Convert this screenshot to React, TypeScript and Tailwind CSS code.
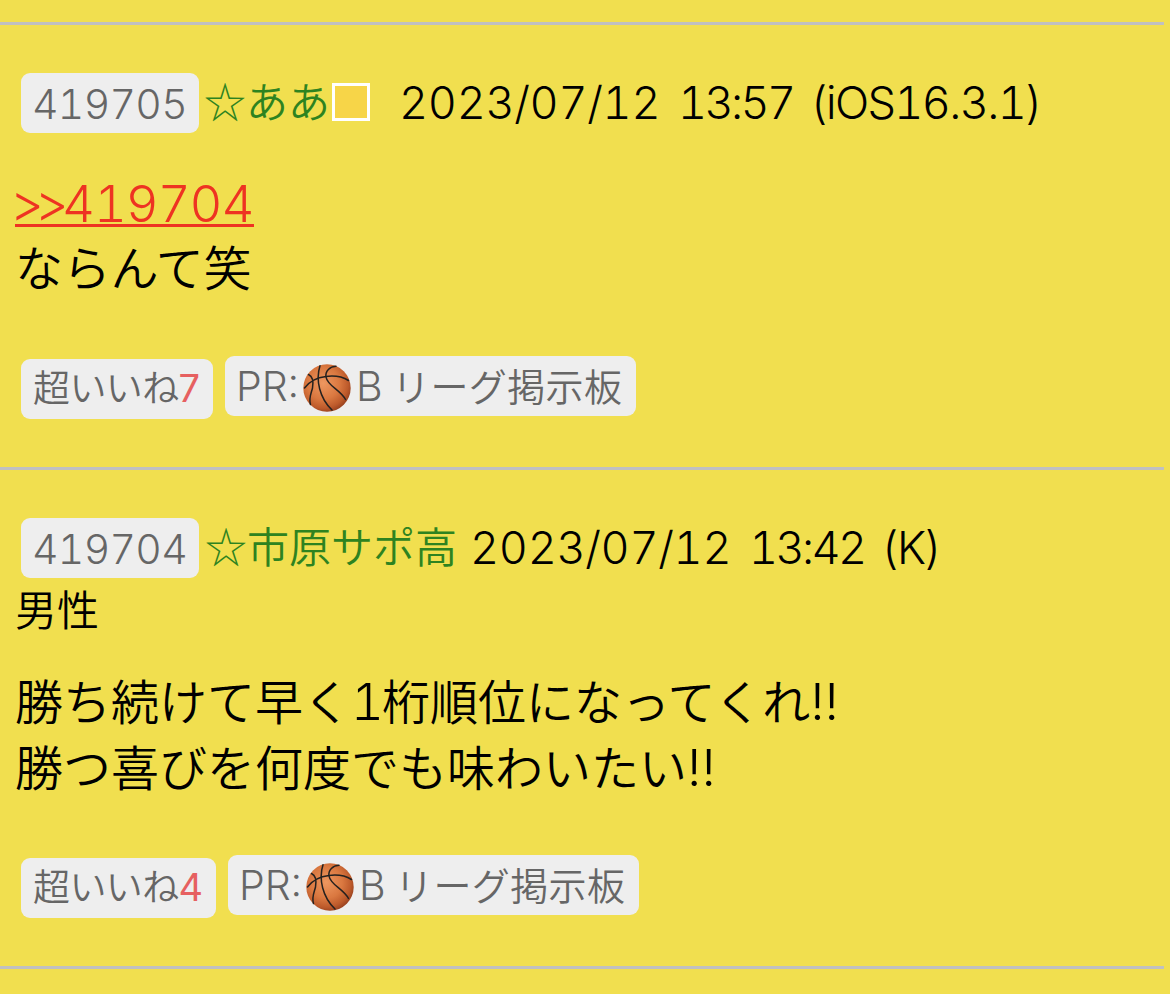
import React from 'react';

const JP = "font-['Noto_Sans_CJK_JP',sans-serif] font-[350] whitespace-pre";
const LATIN = "font-['Inter','Noto_Sans_CJK_JP',sans-serif] font-[340] tabular-nums whitespace-pre";

const Basketball: React.FC = () => (
    <svg viewBox="0 0 48 48" className="mt-[3px] h-12 w-12 shrink-0">
        <defs>
            <radialGradient id="ball" cx="0.42" cy="0.4" r="0.62">
                <stop offset="0" stopColor="#ee9760" />
                <stop offset="0.55" stopColor="#da7840" />
                <stop offset="0.85" stopColor="#bd5a2b" />
                <stop offset="1" stopColor="#9b4320" />
            </radialGradient>
        </defs>
        <circle cx="24" cy="24" r="23.7" fill="url(#ball)" />
        <g fill="none" stroke="#25211f" strokeWidth="1.5" strokeLinecap="round">
            <path d="M1.5 24C6 18 14 13.500 23 12.500C31 11.500 39 12.500 45.500 16.500" />
            <path d="M5.500 10.500C10 12.500 10.500 18 9.500 24C8 30 5.500 34 7.500 40.500" />
            <path d="M17 1.800C12.500 16 16.500 34 29 46" />
            <path d="M33 2.300C27 2.500 22 7 23 13C24.500 22 37 25.500 42.500 35.500" />
        </g>
    </svg>
);

const NumberPill: React.FC<{ children: React.ReactNode }> = ({ children }) => (
    <div className={`${LATIN} ml-[21px] flex h-[60px] w-[178px] items-center rounded-[9px] bg-[#eee] pt-[2px] pl-[11px] text-[41px] leading-[58px] tracking-[-0.7px] text-[#666]`}>
        {children}
    </div>
);

const Stamp: React.FC<{ date: string, time: string, client: string }> = ({ date, time, client }) => (
    <div className={`${LATIN} flex text-[45px] leading-[60px]`}>
        <span className="w-[279px] tracking-[-0.3px]">{date}</span>
        <span className="w-[132px] tracking-[-2.6px]">{time}</span>
        <span className="tracking-[-1.6px]">{client}</span>
    </div>
);

const Actions: React.FC<{ likes: number, likeClass: string }> = ({ likes, likeClass }) => (
    <div className="flex items-start pl-[21px]">
        <div className={`mt-[3px] flex h-[60px] rounded-[9px] bg-[#eee] pl-[12px] text-[#666] ${likeClass}`}>
            <span className={`${JP} h-[60px] text-[37px] leading-[54px] tracking-[-0.6px]`}>超いいね</span>
            <span className="font-['Inter',sans-serif] text-[38px] leading-[58px] font-normal text-[#e66060]">{likes}</span>
        </div>
        <div className="ml-[12px] flex h-[60px] w-[411px] rounded-[9px] bg-[#eee] pl-[11px] text-[#666]">
            <span className={`${LATIN} w-[66.5px] text-[41px] leading-[61px]`}>PR:</span>
            <div className="flex items-center"><Basketball /></div>
            <span className={`${LATIN} ml-[5.5px] w-[36px] text-[41px] leading-[61px]`}>B</span>
            <span className={`${JP} text-[38px] leading-[58px] tracking-[0.4px]`}>リーグ掲示板</span>
        </div>
    </div>
);

const Divider: React.FC = () => <div className="h-[3px] w-[1164px] bg-[#c0c0c0]" />;

const App: React.FC = () => (
    <div className="h-[994px] w-[1170px] overflow-hidden bg-[#f1df4f] pt-[22px] text-black">
        <Divider />
        <div className="h-[442px] pt-[48px]">
            <div className="flex h-[60px] items-start">
                <NumberPill>419705</NumberPill>
                <span className={`${JP} ml-[5px] w-[128px] text-[42px] leading-[54px] text-[#2e8320]`}>☆ああ</span>
                <span className="mt-[10px] mr-[29px] h-[38px] w-[38px] border-[3px] border-white bg-[#f7d548]" />
                <Stamp date="2023/07/12" time="13:57" client="(iOS16.3.1)" />
            </div>
            <div className="mt-[36px] flex h-[66px] pl-[15px]">
                <div className="flex h-[58px] w-[239px] items-baseline border-b-[3px] border-[#ee3322] leading-[69px] text-[#ee3322]">
                    <span className={`${LATIN} -ml-[4px] w-[51px] text-[52px] tracking-[-9px]`}>&gt;&gt;</span>
                    <span className={`${LATIN} text-[51px] tracking-[-1.1px]`}>419704</span>
                </div>
            </div>
            <p className={`${JP} h-[66px] pl-[15px] text-[48px] leading-[61px] tracking-[-0.3px]`}>ならんて笑</p>
            <div className="pt-[55px]">
                <Actions likes={7} likeClass="w-[192px]" />
            </div>
        </div>
        <Divider />
        <div className="h-[496px] pt-[48px]">
            <div className="flex h-[60px] items-start">
                <NumberPill>419704</NumberPill>
                <span className={`${JP} ml-[6px] w-[265px] text-[42px] leading-[54px] text-[#2e8320]`}>☆市原サポ高</span>
                <Stamp date="2023/07/12" time="13:42" client="(K)" />
            </div>
            <p className={`${JP} h-[64px] pl-[15px] text-[42px] leading-[60px]`}>男性</p>
            <div className={`${JP} pt-[27px] pl-[15px] text-[48px] leading-[60px]`}>
                <p className="h-[66px]">勝ち続けて早く<span className={`${LATIN} text-[51px] tracking-[-2px]`}>1</span>桁順位になってくれ<span className={`${LATIN} text-[51px]`}>!!</span></p>
                <p className="h-[66px]">勝つ喜びを何度でも味わいたい<span className={`${LATIN} text-[51px]`}>!!</span></p>
            </div>
            <div className="pt-[54px]">
                <Actions likes={4} likeClass="w-[195px]" />
            </div>
        </div>
        <Divider />
    </div>
);

export default App;
